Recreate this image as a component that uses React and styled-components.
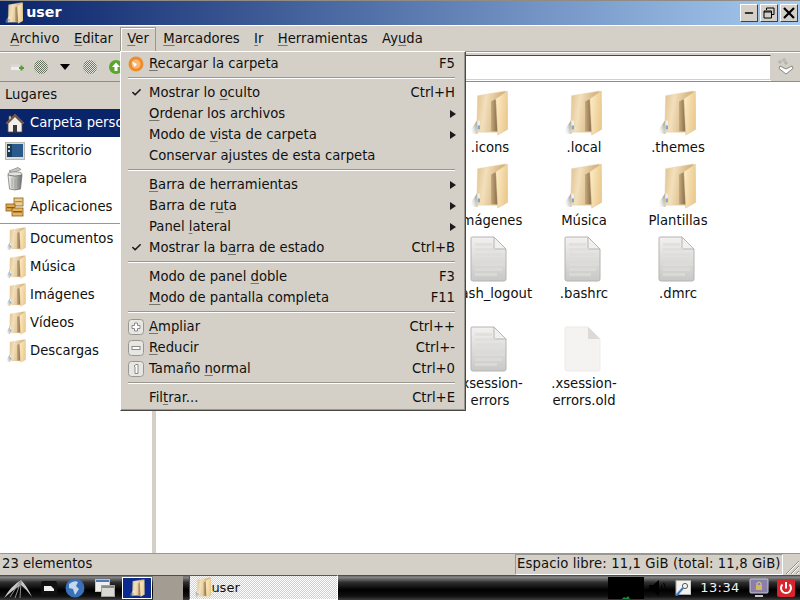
import React from 'react'
import styled, { createGlobalStyle } from 'styled-components'
import { Minus, Check } from 'lucide-react'

const GlobalStyle = createGlobalStyle`
  html, body {
    margin: 0;
    padding: 0;
    overflow: hidden;
  }
  * {
    box-sizing: border-box;
  }
`

const Desktop = styled.div`
  position: relative;
  width: 800px;
  height: 600px;
  display: flex;
  flex-direction: column;
  font-family: "DejaVu Sans", sans-serif;
  font-size: 13.2px;
  color: #101010;
  background: #d4d0c8;
  overflow: hidden;
`

const TitleBar = styled.div`
  height: 26px;
  flex: none;
  display: flex;
  align-items: center;
  padding: 2px 2px 2px 4px;
  border-top: 1px solid #8f8c86;
  border-bottom: 1px solid #fff;
  background: linear-gradient(90deg, #0a246a, #a6caf0);
`

const TitleText = styled.span`
  flex: 1;
  margin-left: 3px;
  padding-bottom: 2px;
  color: #fff;
  font-weight: bold;
  font-size: 14.2px;
`

const WindowButton = styled.div`
  width: 18px;
  height: 18px;
  margin-left: 2px;
  display: flex;
  align-items: center;
  justify-content: center;
  background: #d4d0c8;
  border: 1px solid;
  border-color: #fff #404040 #404040 #fff;
`

const MenuBar = styled.div`
  height: 26px;
  flex: none;
  display: flex;
  align-items: center;
  padding-left: 3px;
  border-bottom: 1px solid #9a9690;
`

const MenuTitle = styled.div`
  height: 24px;
  display: flex;
  align-items: center;
  padding: 0 6.2px 2px;
  border: 1px solid ${props => (props.$open ? '#9a9690' : 'transparent')};
  border-bottom: none;
  box-shadow: ${props => (props.$open ? 'inset 1px 1px 0 #fff' : 'none')};
`

const Mnemonic = styled.span`
  text-decoration: underline;
  text-underline-offset: 2px;
  text-decoration-color: #77756f;
`

const ToolBar = styled.div`
  height: 30px;
  flex: none;
  display: flex;
  align-items: center;
  padding-left: 6px;
  border-top: 1px solid #fff;
  border-bottom: 1px solid #8f8c86;
`

const ToolSlot = styled.div`
  width: ${props => props.$width || 25}px;
  height: 20px;
  flex: none;
  display: flex;
  align-items: center;
  justify-content: center;
`

const PathEntry = styled.div`
  flex: 1;
  height: 25px;
  margin-left: 8px;
  background: #fff;
  border: 1px solid;
  border-color: #4a4844 #d4d0c8 #d4d0c8 #4a4844;
  box-shadow: 0 1px 0 #fff;
`

const BookmarkSlot = styled.div`
  width: 29px;
  flex: none;
  display: flex;
  justify-content: center;
`

const Body = styled.div`
  flex: 1;
  min-height: 0;
  display: flex;
`

const Sidebar = styled.div`
  width: 152px;
  flex: none;
  background: #fff;
  overflow: hidden;
`

const SidebarHeading = styled.div`
  height: 27px;
  display: flex;
  align-items: center;
  padding: 0 0 2px 5px;
  background: #d4d0c8;
`

const PlaceRow = styled.div`
  height: 28px;
  display: flex;
  align-items: center;
  padding-left: 4px;
  white-space: nowrap;
  background: ${props => (props.$active ? '#0a246a' : 'transparent')};
  color: ${props => (props.$active ? '#fff' : '#101010')};
`

const PlaceIcon = styled.div`
  width: 22px;
  height: 24px;
  margin-right: 4px;
  flex: none;
  display: flex;
  align-items: center;
  justify-content: center;
`

const PlaceName = styled.span`
  padding-bottom: 2px;
`

const PlaceDivider = styled.div`
  height: 1px;
  margin: 2px 0 1px;
  background: #9a9690;
`

const Splitter = styled.div`
  width: 4px;
  flex: none;
  background: #d4d0c8;
`

// the three columns that lie wholly under the open menu are left out
const FileGrid = styled.div`
  flex: 1;
  display: grid;
  grid-template-columns: repeat(3, 94px);
  grid-auto-rows: min-content;
  padding: 6px 0 0 287px;
  background: #fff;
  overflow: hidden;
`

const FileItem = styled.div`
  height: ${props => (props.$tall ? 90 : 73)}px;
  display: flex;
  flex-direction: column;
  align-items: center;
  text-align: center;
  line-height: 17px;
`

const FileIcon = styled.div`
  height: 50px;
  margin: 0 4px 1px 0;
  flex: none;
  display: flex;
  align-items: center;
  justify-content: center;
`

const StatusBar = styled.div`
  height: 22px;
  flex: none;
  display: flex;
  align-items: stretch;
  border-top: 1px solid #9a9690;
`

const StatusLeft = styled.div`
  flex: 1;
  padding-left: 2px;
  line-height: 19px;
`

const StatusRight = styled.div`
  width: 268px;
  flex: none;
  padding-left: 1px;
  line-height: 18px;
  letter-spacing: 0.12px;
  border: 1px solid;
  border-color: #9a9690 #fff #fff #9a9690;
  white-space: nowrap;
`

const Grip = styled.div`
  width: 17px;
  flex: none;
  display: flex;
  align-items: flex-end;
`

const TaskBar = styled.div`
  height: 25px;
  flex: none;
  display: flex;
  align-items: center;
  background: linear-gradient(180deg, #3a3a3a 0%, #8a8a8a 8%, #2e2e2e 30%, #000 60%, #111 85%, #3d3d3d 100%);
`

const LaunchSlot = styled.div`
  width: ${props => props.$width}px;
  height: 24px;
  flex: none;
  display: flex;
  align-items: center;
  justify-content: center;
`

const ActiveDesk = styled.div`
  width: 30px;
  height: 22px;
  margin: 0 1px 0 0;
  flex: none;
  display: flex;
  align-items: center;
  justify-content: center;
  background: #0a2a90;
  border: 1px solid #fff;
`

const IdleDesk = styled.div`
  width: 30px;
  height: 24px;
  margin-right: 6px;
  flex: none;
  background: #a39c92;
`

const TaskButton = styled.div`
  width: 149px;
  height: 25px;
  flex: none;
  display: flex;
  align-items: center;
  padding-left: 3px;
  font-size: 13px;
  color: #101010;
  background-color: #f2f0ec;
  background-image: repeating-conic-gradient(#d4d0c8 0 25%, #fff 0 50%);
  background-size: 2px 2px;
  border: 1px solid;
  border-color: #5a5852 #fff #fff #5a5852;
`

const TaskSpacer = styled.div`
  flex: 1;
`

const CpuGraph = styled.div`
  width: 36px;
  height: 22px;
  flex: none;
  background: #000;
  display: flex;
  align-items: flex-end;
`

const TrayIcon = styled.div`
  width: ${props => props.$width}px;
  flex: none;
  display: flex;
  align-items: center;
  justify-content: center;
`

const Clock = styled.div`
  width: 52px;
  flex: none;
  text-align: center;
  color: #f2f2f2;
  font-size: 13px;
  letter-spacing: 0.4px;
`

const Menu = styled.div`
  position: absolute;
  top: 51px;
  left: 120px;
  width: 346px;
  height: 360px;
  padding: 1px 1px;
  background: #d4d0c8;
  border: 1px solid;
  border-color: #fff #4a4844 #4a4844 #fff;
  box-shadow: inset -1px -1px 0 #9a9690;
`

const MenuRow = styled.div`
  height: 21px;
  display: flex;
  align-items: center;
  white-space: nowrap;
`

const MenuGutter = styled.div`
  width: 26px;
  margin-left: 1px;
  flex: none;
  display: flex;
  align-items: center;
  justify-content: center;
`

const MenuLabel = styled.div`
  flex: 1;
`

const Shortcut = styled.div`
  margin-right: 9px;
`

const SubArrow = styled.div`
  width: 0;
  height: 0;
  margin-right: 8px;
  border-style: solid;
  border-width: 4px 0 4px 6px;
  border-color: transparent transparent transparent #1a1a1a;
`

const MenuSeparator = styled.div`
  height: 2px;
  margin: 3px 9px 3px 6px;
  background: #9a9690;
  border-bottom: 1px solid #fff;
`

const FolderGlyph = ({ size = 46 }) => (
  <svg height={size} width={(size * 42) / 48} viewBox="0 0 42 48">
    <defs>
      <linearGradient id="folderBack" x1="0" y1="0" x2="1" y2="0.2">
        <stop offset="0" stopColor="#dfc08c" />
        <stop offset="0.35" stopColor="#f2e0bc" />
        <stop offset="0.75" stopColor="#dcbc8a" />
        <stop offset="1" stopColor="#cfae7c" />
      </linearGradient>
      <linearGradient id="folderFold" x1="0" y1="0" x2="1" y2="0">
        <stop offset="0" stopColor="#c8ab7c" />
        <stop offset="1" stopColor="#84694a" />
      </linearGradient>
      <linearGradient id="folderDoor" x1="0" y1="0" x2="1" y2="0.3">
        <stop offset="0" stopColor="#fdeecb" />
        <stop offset="1" stopColor="#eccb90" />
      </linearGradient>
      <linearGradient id="folderShadow" x1="1" y1="0" x2="0" y2="0.4">
        <stop offset="0" stopColor="#6a6a6a" />
        <stop offset="1" stopColor="#ffffff" stopOpacity="0" />
      </linearGradient>
    </defs>
    <path d="M10 31 L0 45 L10 46 Z" fill="url(#folderShadow)" />
    <path d="M10 6 L39 1 L39 42 L31 44 L9 44 Z" fill="url(#folderBack)" stroke="#e6d2a8" strokeWidth="0.5" />
    <path d="M24 12 L30 9 L31 43 L24 43 Z" fill="url(#folderFold)" />
    <path d="M29 9 L41 1 L41.5 41 L31 47 Z" fill="url(#folderDoor)" stroke="#d8bc88" strokeWidth="0.5" />
    <rect x="10" y="32" width="2.5" height="8" fill="#eeeeea" />
    <rect x="10" y="37" width="2.5" height="4" fill="#7da9d8" />
  </svg>
)

const DocGlyph = ({ blank }) => (
  <svg width="37" height="46" viewBox="0 0 37 46">
    <defs>
      <linearGradient id="docFill" x1="0" y1="0" x2="0" y2="1">
        <stop offset="0" stopColor="#f2f1f0" />
        <stop offset="1" stopColor="#c8c8c6" />
      </linearGradient>
    </defs>
    <path
      d="M2 1 H24 L36 13 V43 Q36 45 34 45 H3 Q1 45 1 43 V2 Q1 1 2 1 Z"
      fill={blank ? '#f4f3f1' : 'url(#docFill)'}
      stroke={blank ? '#ecebe8' : '#b4b4b2'}
    />
    <path d="M24 1 L36 13 H24 Z" fill={blank ? '#dcdad6' : '#f0f0ee'} stroke={blank ? 'none' : '#b4b4b2'} />
    {!blank && (
      <g fill="#dedddb" opacity="0.75">
        <rect x="5" y="7" width="17" height="3" />
        <rect x="5" y="12" width="20" height="3" />
        <rect x="5" y="17" width="27" height="3" />
        <rect x="5" y="22" width="27" height="3" />
        <rect x="5" y="27" width="30" height="3" />
        <rect x="5" y="32" width="27" height="3" />
        <rect x="5" y="37" width="22" height="3" />
      </g>
    )}
  </svg>
)

const HomeGlyph = () => (
  <svg width="20" height="20" viewBox="0 0 20 20">
    <path d="M10 1 L19 10 L17 11 L17 19 L3 19 L3 11 L1 10 L4 7 L4 3 L6 3 L6 5 Z" fill="#f2f0ea" stroke="#6a4a3a" strokeWidth="0.8" />
    <path d="M1 10 L10 1 L19 10 L17 11 L10 4 L3 11 Z" fill="#6e5446" />
    <rect x="8" y="12" width="4" height="7" fill="#3a3a38" />
  </svg>
)

const DesktopGlyph = () => (
  <svg width="20" height="18" viewBox="0 0 20 18">
    <rect x="0.5" y="0.5" width="19" height="17" fill="#dcdcd8" stroke="#b8b8b4" />
    <rect x="2" y="2" width="16" height="13" fill="#2a5a8c" />
    <rect x="2" y="2" width="5" height="13" fill="#1c3a5c" />
    <rect x="3" y="4" width="2" height="2" fill="#e8d890" />
    <rect x="3" y="8" width="2" height="2" fill="#c8d8e8" />
  </svg>
)

const TrashGlyph = () => (
  <svg width="16" height="24" viewBox="0 0 16 24">
    <defs>
      <linearGradient id="trashFill" x1="0" y1="0" x2="1" y2="0">
        <stop offset="0" stopColor="#f4f4f2" />
        <stop offset="0.5" stopColor="#bdbdba" />
        <stop offset="1" stopColor="#6c6c6a" />
      </linearGradient>
    </defs>
    <path d="M2 4 L11 0.5 L14 2.5 L5 6 Z" fill="#c8c8c4" stroke="#74746f" strokeWidth="0.6" />
    <ellipse cx="8" cy="7" rx="7.2" ry="2.2" fill="#e2e2df" stroke="#74746f" strokeWidth="0.7" />
    <path d="M1 8 L2.5 22 Q8 24 13.5 22 L15 8 Q8 10.5 1 8 Z" fill="url(#trashFill)" stroke="#6c6c6a" strokeWidth="0.7" />
    <path d="M5 11 V21 M8 11.5 V22 M11 11 V21" stroke="#8c8c88" strokeWidth="0.6" />
  </svg>
)

const AppsGlyph = () => (
  <svg width="20" height="20" viewBox="0 0 20 20">
    <g stroke="#8a5a1c" strokeWidth="0.8">
      <rect x="9" y="1" width="9" height="8" fill="#eccd8c" />
      <rect x="1" y="7" width="9" height="7" fill="#dda94c" />
      <rect x="7" y="11" width="11" height="8" fill="#e4b560" />
    </g>
    <rect x="8" y="14" width="9" height="1.5" fill="#8a5a1c" />
    <rect x="2" y="10" width="7" height="1.2" fill="#8a5a1c" />
    <rect x="10" y="4" width="7" height="1.2" fill="#b08a44" />
  </svg>
)

const DotOrb = ({ id, dot }) => (
  <svg width="14" height="14" viewBox="0 0 14 14">
    <defs>
      <pattern id={id} width="2" height="2" patternUnits="userSpaceOnUse">
        <rect width="2" height="2" fill="#e4e6de" />
        <rect width="1" height="1" fill={dot} />
        <rect x="1" y="1" width="1" height="1" fill={dot} />
      </pattern>
    </defs>
    <circle cx="7" cy="7" r="7" fill={`url(#${id})`} />
  </svg>
)

const UpOrb = () => (
  <svg width="14" height="14" viewBox="0 0 14 14">
    <circle cx="7" cy="7" r="7" fill="#5aa62c" />
    <path d="M7 2.5 L11 7 H8.5 V11 H5.5 V7 H3 Z" fill="#fff" />
  </svg>
)

const NewFolderGlyph = () => (
  <svg width="14" height="12" viewBox="0 0 14 12">
    <path d="M0 4 L9 3 L11 6 L2 7 Z" fill="#d8d8d6" />
    <path d="M1 6 H10 V9 H1 Z" fill="#eeeeec" />
    <rect x="9" y="6" width="5" height="2" fill="#52a030" />
    <rect x="10.5" y="4.5" width="2" height="5" fill="#52a030" />
  </svg>
)

const BookmarkGlyph = () => (
  <svg width="16" height="18" viewBox="0 0 16 18">
    <circle cx="6" cy="2" r="1.2" fill="#eeeeea" stroke="#8a8a86" strokeWidth="0.7" />
    <circle cx="2" cy="4" r="1.1" fill="#eeeeea" stroke="#8a8a86" strokeWidth="0.7" />
    <circle cx="8" cy="5" r="1.1" fill="#eeeeea" stroke="#8a8a86" strokeWidth="0.7" />
    <path d="M2 8 L8 11 L14 8 L15 10.5 L8 16 L1 10.5 Z" fill="#fff" stroke="#6e6e6a" strokeWidth="0.8" />
  </svg>
)

const ReloadGlyph = () => (
  <svg width="16" height="16" viewBox="0 0 16 16">
    <circle cx="8" cy="8" r="7.5" fill="#f08c28" />
    <circle cx="8" cy="8" r="4.5" fill="#f8b878" />
    <path d="M4 5.5 L9 8 L6.5 11 Z" fill="#fff" />
  </svg>
)

const ZoomGlyph = ({ children }) => (
  <svg width="16" height="16" viewBox="0 0 16 16">
    <rect x="0.5" y="0.5" width="15" height="15" rx="3" fill="#e8e6e2" stroke="#9a9690" />
    {children}
  </svg>
)

const LauncherLogo = () => (
  <svg width="30" height="24" viewBox="0 0 30 24">
    <path d="M1 22 Q8 10 18 4 Q24 10 29 21 Q22 12 18 9 Q10 14 1 22 Z" fill="#c8c8c8" />
    <path d="M18 4 L7 21 M18 5 L12 22 M18 5 L17 22" stroke="#8e8e8e" strokeWidth="1" fill="none" />
  </svg>
)

const GlobeGlyph = () => (
  <svg width="20" height="20" viewBox="0 0 20 20">
    <circle cx="10" cy="10" r="9.5" fill="#3a70b8" />
    <path d="M4 6 Q9 2 13 4 L11 8 L14 11 L10 17 L8 11 L4 10 Z" fill="#c2d8ee" />
  </svg>
)

const WindowsGlyph = () => (
  <svg width="20" height="18" viewBox="0 0 20 18">
    <rect x="0.5" y="0.5" width="14" height="12" fill="#eeeeec" stroke="#c0c0bc" />
    <rect x="1" y="1" width="13" height="2" fill="#4a78c0" />
    <rect x="6.5" y="6.5" width="13" height="11" fill="#d8d8d4" stroke="#a0a09c" />
    <rect x="7" y="7" width="12" height="2" fill="#8a8a86" />
  </svg>
)

const FilesLauncher = () => (
  <svg width="16" height="14" viewBox="0 0 16 14">
    <rect x="0" y="0" width="16" height="14" rx="2" fill="#111" />
    <path d="M3 5 L10 5 L13 8 V10 H3 Z" fill="#f0f0f0" />
  </svg>
)

const KeyGlyph = () => (
  <svg width="16" height="16" viewBox="0 0 16 16">
    <rect x="1" y="0.5" width="15" height="14" fill="#f2f2ee" stroke="#a8a8a4" />
    <circle cx="10" cy="6" r="2.6" fill="none" stroke="#5a5a58" />
    <path d="M8 8 L1 16" stroke="#3a78c8" strokeWidth="2" />
  </svg>
)

const LockMonitor = () => (
  <svg width="20" height="20" viewBox="0 0 20 20">
    <rect x="1" y="1" width="18" height="14" rx="1" fill="#8a7fa8" stroke="#c8c4d4" />
    <rect x="6" y="17" width="8" height="2" fill="#c8c4d4" />
    <rect x="7" y="7" width="6" height="5" fill="#d8b850" />
    <path d="M8 7 V5 Q10 3 12 5 V7" fill="none" stroke="#d8d0a0" />
  </svg>
)

const PowerGlyph = () => (
  <svg width="18" height="18" viewBox="0 0 18 18">
    <rect width="18" height="18" rx="2" fill="#d8242c" />
    <path d="M5.5 5.5 A5 5 0 1 0 12.5 5.5" fill="none" stroke="#fff" strokeWidth="2" />
    <rect x="8" y="3" width="2" height="6.5" fill="#fff" />
  </svg>
)

const SpeakerGlyph = () => (
  <svg width="18" height="16" viewBox="0 0 18 16">
    <path d="M0 5 H4 L10 0 V16 L4 11 H0 Z" fill="#000" />
    <path d="M12 5 Q14 8 12 11 M14.5 3 Q18 8 14.5 13" stroke="#050505" strokeWidth="1.2" fill="none" />
  </svg>
)

const GripGlyph = () => (
  <svg width="17" height="17" viewBox="0 0 17 17">
    <path d="M16 3 L3 16 M16 8 L8 16 M16 13 L13 16" stroke="#8f8c86" fill="none" />
    <path d="M16 4 L4 16 M16 9 L9 16 M16 14 L14 16" stroke="#fff" fill="none" />
  </svg>
)

const places = ['Escritorio', 'Papelera', 'Aplicaciones']
const bookmarks = ['Documentos', 'Música', 'Imágenes', 'Vídeos', 'Descargas']
const placeIcons = { Escritorio: <DesktopGlyph />, Papelera: <TrashGlyph />, Aplicaciones: <AppsGlyph /> }

const files = [
  ['.icons', 'folder'], ['.local', 'folder'], ['.themes', 'folder'],
  ['Imágenes', 'folder'], ['Música', 'folder'], ['Plantillas', 'folder'],
  ['.bash_logout', 'doc'], ['.bashrc', 'doc'], ['.dmrc', 'doc'],
  ['.xsession-errors', 'doc'], ['.xsession-errors.old', 'blank'],
]

// label parts: before, mnemonic, after
const menuGroups = [
  [{ icon: 'reload', label: ['', 'R', 'ecargar la carpeta'], key: 'F5' }],
  [
    { check: true, label: ['Mostrar lo ', 'o', 'culto'], key: 'Ctrl+H' },
    { label: ['', 'O', 'rdenar los archivos'], sub: true },
    { label: ['Modo de ', 'v', 'ista de carpeta'], sub: true },
    { label: ['Conservar ajustes de esta carpeta', '', ''] },
  ],
  [
    { label: ['', 'B', 'arra de herramientas'], sub: true },
    { label: ['Barra de r', 'u', 'ta'], sub: true },
    { label: ['Panel ', 'l', 'ateral'], sub: true },
    { check: true, label: ['Mostrar la b', 'a', 'rra de estado'], key: 'Ctrl+B' },
  ],
  [
    { label: ['Modo de panel ', 'd', 'oble'], key: 'F3' },
    { label: ['', 'M', 'odo de pantalla completa'], key: 'F11' },
  ],
  [
    { icon: 'plus', label: ['', 'A', 'mpliar'], key: 'Ctrl++' },
    { icon: 'minus', label: ['', 'R', 'educir'], key: 'Ctrl+-' },
    { icon: 'one', label: ['Tamaño ', 'n', 'ormal'], key: 'Ctrl+0' },
  ],
  [{ label: ['Fil', 't', 'rar...'], key: 'Ctrl+E' }],
]

const menuIcon = item => {
  if (item.check) return <Check size={11} strokeWidth={3.5} color="#1a1a1a" />
  if (item.icon === 'reload') return <ReloadGlyph />
  if (item.icon === 'plus') {
    return <ZoomGlyph><path d="M6.5 4 H9.5 V6.5 H12 V9.5 H9.5 V12 H6.5 V9.5 H4 V6.5 H6.5 Z" fill="#fff" stroke="#8a8a86" /></ZoomGlyph>
  }
  if (item.icon === 'minus') {
    return <ZoomGlyph><rect x="4" y="6.5" width="8" height="3" fill="#fff" stroke="#8a8a86" /></ZoomGlyph>
  }
  if (item.icon === 'one') {
    return <ZoomGlyph><path d="M6 5 L8 3.5 H10 V12.5 H7 V6 Z" fill="#fff" stroke="#8a8a86" /></ZoomGlyph>
  }
  return null
}

const fileIcon = kind => {
  if (kind === 'folder') return <FolderGlyph />
  return <DocGlyph blank={kind === 'blank'} />
}

export default function App() {
  return (
    <Desktop>
      <GlobalStyle />
      <TitleBar>
        <FolderGlyph size={22} />
        <TitleText>user</TitleText>
        <WindowButton><Minus size={12} strokeWidth={3} color="#000" /></WindowButton>
        <WindowButton>
          <svg width="12" height="12" viewBox="0 0 12 12">
            <path d="M3.5 3 V1 H11 V7.5 H9 M1 4 H8.5 V11 H1 Z M1 5 H8.5" fill="none" stroke="#000" />
          </svg>
        </WindowButton>
        <WindowButton>
          <svg width="12" height="12" viewBox="0 0 12 12">
            <path d="M1 1 L11 11 M11 1 L1 11" stroke="#000" strokeWidth="2.2" />
          </svg>
        </WindowButton>
      </TitleBar>
      <MenuBar>
        <MenuTitle><span><Mnemonic>A</Mnemonic>rchivo</span></MenuTitle>
        <MenuTitle><span><Mnemonic>E</Mnemonic>ditar</span></MenuTitle>
        <MenuTitle $open><span><Mnemonic>V</Mnemonic>er</span></MenuTitle>
        <MenuTitle><span><Mnemonic>M</Mnemonic>arcadores</span></MenuTitle>
        <MenuTitle><span><Mnemonic>I</Mnemonic>r</span></MenuTitle>
        <MenuTitle><span><Mnemonic>H</Mnemonic>erramientas</span></MenuTitle>
        <MenuTitle><span>Ay<Mnemonic>u</Mnemonic>da</span></MenuTitle>
      </MenuBar>
      <ToolBar>
        <ToolSlot $width={22}><NewFolderGlyph /></ToolSlot>
        <ToolSlot $width={25}><DotOrb id="orbBack" dot="#66705e" /></ToolSlot>
        <ToolSlot $width={24}>
          <svg width="10" height="6" viewBox="0 0 10 6"><path d="M0 0 H10 L5 6 Z" fill="#000" /></svg>
        </ToolSlot>
        <ToolSlot $width={26}><DotOrb id="orbForward" dot="#5c8f3c" /></ToolSlot>
        <ToolSlot $width={25}><UpOrb /></ToolSlot>
        <PathEntry />
        <BookmarkSlot><BookmarkGlyph /></BookmarkSlot>
      </ToolBar>
      <Body>
        <Sidebar>
          <SidebarHeading>Lugares</SidebarHeading>
          <PlaceRow $active>
            <PlaceIcon><HomeGlyph /></PlaceIcon><PlaceName>Carpeta personal</PlaceName>
          </PlaceRow>
          {places.map(name => (
            <PlaceRow key={name}>
              <PlaceIcon>{placeIcons[name]}</PlaceIcon><PlaceName>{name}</PlaceName>
            </PlaceRow>
          ))}
          <PlaceDivider />
          {bookmarks.map(name => (
            <PlaceRow key={name}>
              <PlaceIcon><FolderGlyph size={24} /></PlaceIcon><PlaceName>{name}</PlaceName>
            </PlaceRow>
          ))}
        </Sidebar>
        <Splitter />
        <FileGrid>
          {files.map(([name, kind], index) => (
            <FileItem key={name} $tall={index >= 6 && index < 9}>
              <FileIcon>{fileIcon(kind)}</FileIcon>
              {name}
            </FileItem>
          ))}
        </FileGrid>
      </Body>
      <StatusBar>
        <StatusLeft>23 elementos</StatusLeft>
        <StatusRight>Espacio libre: 11,1 GiB (total: 11,8 GiB)</StatusRight>
        <Grip><GripGlyph /></Grip>
      </StatusBar>
      <TaskBar>
        <LaunchSlot $width={36}><LauncherLogo /></LaunchSlot>
        <LaunchSlot $width={26}><FilesLauncher /></LaunchSlot>
        <LaunchSlot $width={26}><GlobeGlyph /></LaunchSlot>
        <LaunchSlot $width={34}><WindowsGlyph /></LaunchSlot>
        <ActiveDesk><FolderGlyph size={18} /></ActiveDesk>
        <IdleDesk />
        <TaskButton><FolderGlyph size={21} />user</TaskButton>
        <TaskSpacer />
        <CpuGraph>
          <svg width="36" height="3" viewBox="0 0 36 3">
            <path d="M14 3 L16 1 L18 2 L20 0 L22 3 Z" fill="#1e8a2e" />
          </svg>
        </CpuGraph>
        <TrayIcon $width={28}><SpeakerGlyph /></TrayIcon>
        <TrayIcon $width={22}><KeyGlyph /></TrayIcon>
        <Clock>13:34</Clock>
        <TrayIcon $width={26}><LockMonitor /></TrayIcon>
        <TrayIcon $width={28}><PowerGlyph /></TrayIcon>
      </TaskBar>
      <Menu>
        {menuGroups.map((group, groupIndex) => (
          <React.Fragment key={groupIndex}>
            {groupIndex > 0 && <MenuSeparator />}
            {group.map(item => (
              <MenuRow key={item.label.join('')}>
                <MenuGutter>{menuIcon(item)}</MenuGutter>
                <MenuLabel>
                  {item.label[0]}<Mnemonic>{item.label[1]}</Mnemonic>{item.label[2]}
                </MenuLabel>
                {item.key && <Shortcut>{item.key}</Shortcut>}
                {item.sub && <SubArrow />}
              </MenuRow>
            ))}
          </React.Fragment>
        ))}
      </Menu>
    </Desktop>
  )
}
